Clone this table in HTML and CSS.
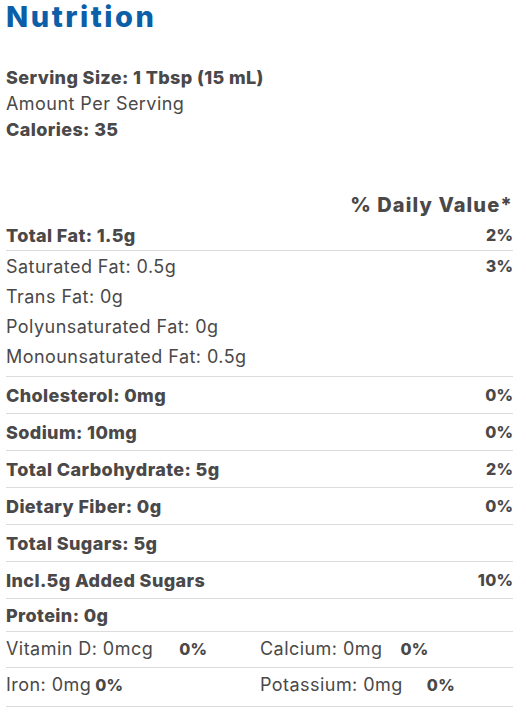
FILE: index.html
```html
<!DOCTYPE html>
<html lang="en">
<head>
<meta charset="utf-8">
<title>Nutrition</title>
<link rel="stylesheet" href="styles.css">
</head>
<body>
<main class="panel">
  <h1 class="title">Nutrition</h1>

  <section class="serving">
    <div class="b">Serving Size: 1 Tbsp (15 mL)</div>
    <div>Amount Per Serving</div>
    <div class="b">Calories: 35</div>
  </section>

  <div class="dv-head">% Daily Value*</div>

  <section class="group group-fat">
    <div class="row row-main"><span class="b">Total Fat: 1.5g</span><span class="pct">2%</span></div>
    <div class="sub-list">
      <div class="row row-sub"><span>Saturated Fat: 0.5g</span><span class="pct">3%</span></div>
      <div class="row row-sub"><span>Trans Fat: 0g</span></div>
      <div class="row row-sub"><span>Polyunsaturated Fat: 0g</span></div>
      <div class="row row-sub"><span>Monounsaturated Fat: 0.5g</span></div>
    </div>
  </section>

  <div class="row row-big"><span class="b">Cholesterol: 0mg</span><span class="pct">0%</span></div>
  <div class="row row-big"><span class="b">Sodium: 10mg</span><span class="pct">0%</span></div>
  <div class="row row-big"><span class="b">Total Carbohydrate: 5g</span><span class="pct">2%</span></div>
  <div class="row row-big"><span class="b">Dietary Fiber: 0g</span><span class="pct">0%</span></div>
  <div class="row row-big"><span class="b">Total Sugars: 5g</span></div>
  <div class="row row-big"><span class="b">Incl.5g Added Sugars</span><span class="pct">10%</span></div>
  <div class="row row-protein"><span class="b">Protein: 0g</span></div>

  <div class="vit-row">
    <div class="vit"><span>Vitamin D: 0mcg</span><span class="vpct gap-d">0%</span></div>
    <div class="vit"><span>Calcium: 0mg</span><span class="vpct gap-ca">0%</span></div>
  </div>
  <div class="vit-row vit-last">
    <div class="vit"><span>Iron: 0mg</span><span class="vpct gap-fe">0%</span></div>
    <div class="vit"><span>Potassium: 0mg</span><span class="vpct gap-k">0%</span></div>
  </div>
</main>
</body>
</html>
```
FILE: styles.css
```css
html, body {
  margin: 0;
  padding: 0;
  background: #ffffff;
}

body {
  font-family: "Inter", "Open Sans", sans-serif;
  color: #4a4848;
  font-size: 18px;
  letter-spacing: 0.45px;
}

.panel {
  width: 507px;
  margin-left: 6px;
}

.title {
  margin: 0;
  font-size: 29px;
  line-height: 34px;
  font-weight: 800;
  letter-spacing: 2.5px;
  color: #0b5ea8;
}

.b {
  font-weight: 800;
  letter-spacing: 0.38px;
}

.serving {
  margin-top: 31px;
  line-height: 26px;
}

.dv-head {
  margin-top: 47px;
  text-align: right;
  font-size: 20px;
  line-height: 30px;
  font-weight: 800;
  letter-spacing: 1.1px;
}

.row {
  display: flex;
  justify-content: space-between;
  align-items: center;
}

.pct {
  font-weight: 800;
  font-size: 16px;
  letter-spacing: 0.3px;
  margin-right: -0.3px;
}

.group-fat {
  border-bottom: 1px solid #dcdcdc;
  padding-bottom: 5px;
}

.row-main {
  height: 30px;
  border-bottom: 1px solid #dcdcdc;
}

.row-sub {
  height: 30px;
}

.row-big {
  height: 36px;
  border-bottom: 1px solid #dcdcdc;
}

.row-protein {
  height: 32px;
  border-bottom: 1px solid #dcdcdc;
}

.vit-row {
  display: grid;
  grid-template-columns: 254px 1fr;
  padding: 4px 0 5px;
  line-height: 26px;
  border-bottom: 1px solid #dcdcdc;
}

.vit-last {
  padding-bottom: 8px;
}

.vpct {
  font-weight: 800;
  font-size: 16px;
  letter-spacing: 0.3px;
}

.gap-d { margin-left: 26px; }
.gap-ca { margin-left: 18px; }
.gap-fe { margin-left: 4px; }
.gap-k { margin-left: 24px; }
```
